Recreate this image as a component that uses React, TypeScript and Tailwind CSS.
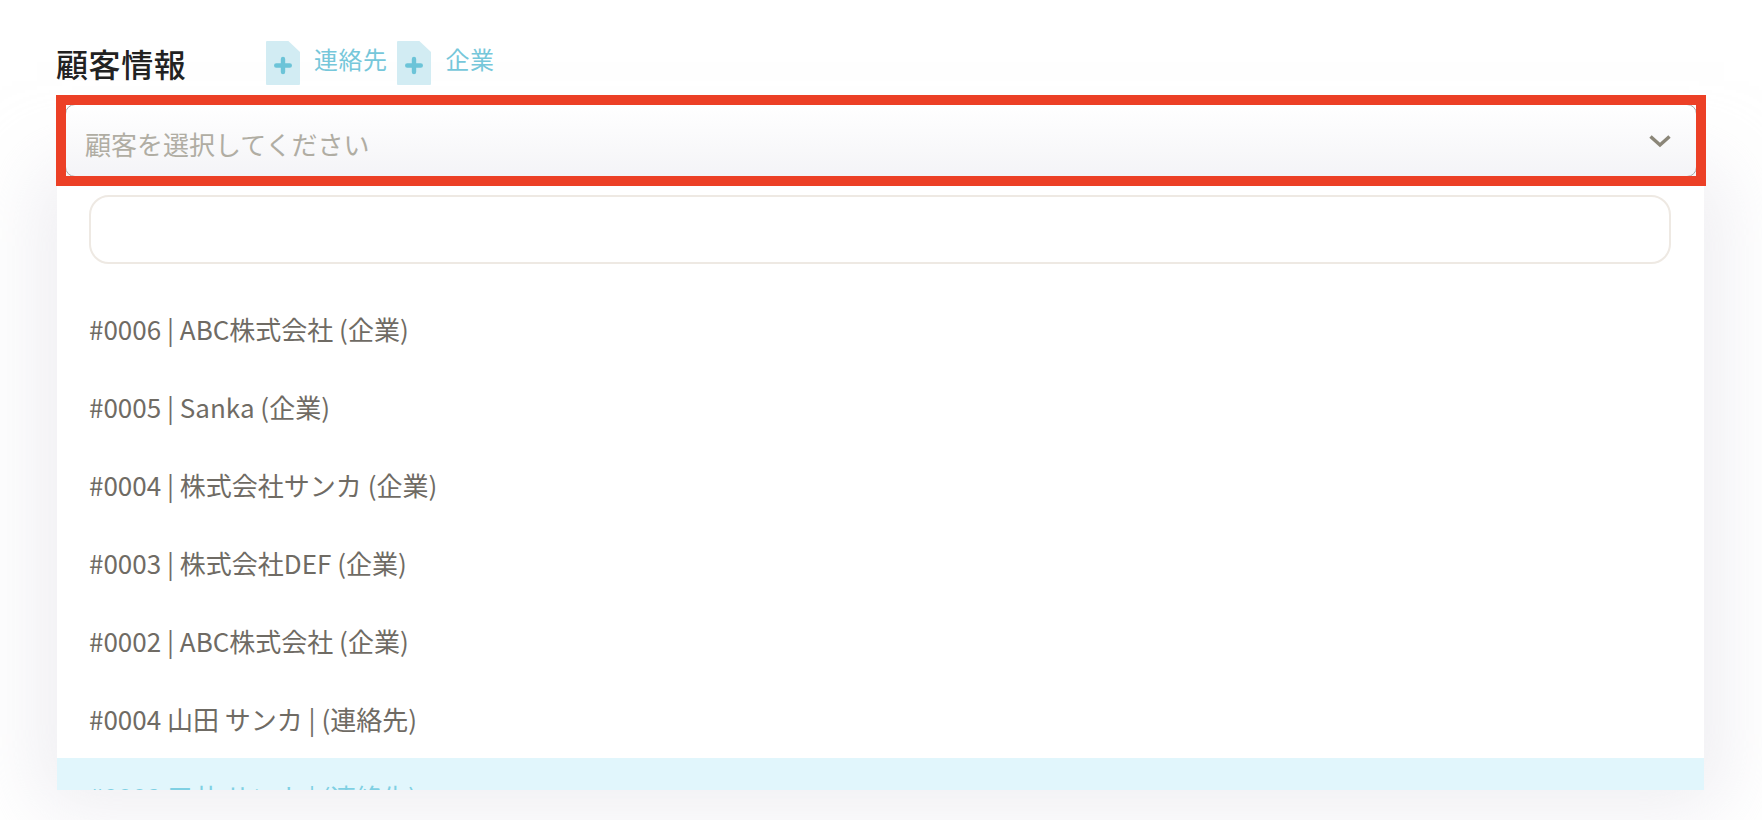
const rows = [
  '#0006 | ABC株式会社 (企業)',
  '#0005 | Sanka (企業)',
  '#0004 | 株式会社サンカ (企業)',
  '#0003 | 株式会社DEF (企業)',
  '#0002 | ABC株式会社 (企業)',
  '#0004 山田 サンカ | (連絡先)',
];

function FilePlus() {
  return (
    <svg width="34" height="44" viewBox="0 0 35 44" preserveAspectRatio="none" className="shrink-0">
      <path d="M1 0H23L35 11V43a1 1 0 0 1-1 1H1a1 1 0 0 1-1-1V1a1 1 0 0 1 1-1Z" fill="#d2ecf3" />
      <path d="M17.5 18V31M10.5 24.5H24.5" stroke="#6cc4d8" strokeWidth="4.5" strokeLinecap="round" />
    </svg>
  );
}

export default function App() {
  return (
    <div
      className="h-[820px] overflow-hidden bg-white pl-[56px] pr-[56px] pt-[41px] text-[26px]"
      style={{ fontFamily: '"Noto Sans CJK JP", sans-serif' }}
    >
      <div className="flex h-[54px] items-start">
        <h2 className="-mt-[1px] w-[210px] text-[32px] font-medium leading-[46px] tracking-[0.6px] text-[#222222]">顧客情報</h2>
        <a className="flex items-start text-[24px] tracking-[0.5px] text-[#76c7da]">
          <FilePlus />
          <span className="ml-[14px] mr-[9px] mt-[3px] leading-[30px]">連絡先</span>
        </a>
        <a className="flex items-start text-[24px] tracking-[0.5px] text-[#76c7da]">
          <FilePlus />
          <span className="ml-[15px] mt-[3px] leading-[30px]">企業</span>
        </a>
      </div>

      <div className="relative h-[91px] w-[1650px]">
        <div className="mx-[9px] flex h-[73px] translate-y-[9px] items-center justify-between rounded-[10px] border border-[#a9a9a9] bg-gradient-to-b from-white to-[#f4f4f7] pl-[19px] pr-[24px] text-[#b0ada3]">
          <span className="mt-[5px]">顧客を選択してください</span>
          <svg width="24" height="14" viewBox="0 0 24 14" fill="none">
            <path d="M2.5 2.5L12 11L21.5 2.5" stroke="#8b8678" strokeWidth="3.5" />
          </svg>
        </div>
        <div className="pointer-events-none absolute inset-0 border-[10px] border-[#ec4026]" />
      </div>

      <div className="ml-px h-[604px] w-[1647px] overflow-hidden bg-white pt-[9px] text-[#6f6b64] shadow-[0_0_70px_20px_rgba(226,224,232,0.55)]">
        <div className="mx-[32px] h-[69px] w-[1582px] rounded-[20px] border-2 border-[#eee9e3]" />
        <ul className="mt-[26px]">
          {rows.map((row) => (
            <li key={row} className="flex h-[78px] items-center pb-[2px] pl-[32px]">{row}</li>
          ))}
          <li className="flex h-[78px] items-center bg-[#e1f6fc] pb-[2px] pl-[32px] text-[#7fd0e3]">#0003 三井 サンカ | (連絡先)</li>
        </ul>
      </div>
    </div>
  );
}
